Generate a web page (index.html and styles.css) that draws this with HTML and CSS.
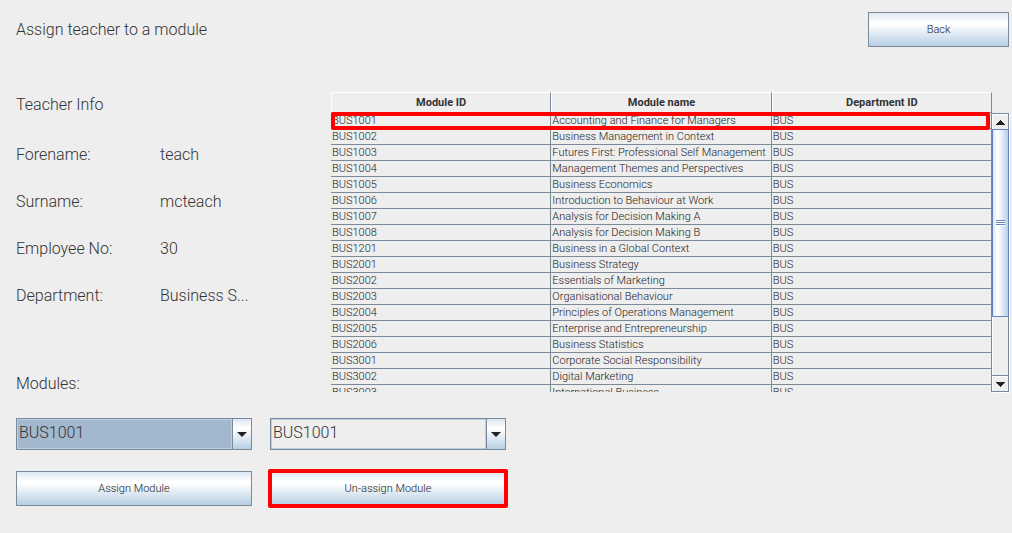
FILE: index.html
```html
<!DOCTYPE html>
<html lang="en">
<head>
<meta charset="utf-8">
<title>Assign teacher to a module</title>
<link rel="stylesheet" href="styles.css">
</head>
<body>
<header class="top">
  <h1 class="title">Assign teacher to a module</h1>
  <button class="btn back" type="button">Back</button>
</header>
<main class="main">
  <section class="info">
    <h2 class="heading">Teacher Info</h2>
    <dl class="details">
      <dt>Forename:</dt><dd>teach</dd>
      <dt>Surname:</dt><dd>mcteach</dd>
      <dt>Employee No:</dt><dd>30</dd>
      <dt>Department:</dt><dd>Business S...</dd>
    </dl>
    <h2 class="heading modules">Modules:</h2>
  </section>
  <section class="pane">
    <div class="viewport">
      <table class="table">
        <thead><tr><th>Module ID</th><th>Module name</th><th>Department ID</th></tr></thead>
        <tbody>
          <tr><td>BUS1001</td><td>Accounting and Finance for Managers</td><td>BUS</td></tr>
          <tr><td>BUS1002</td><td>Business Management in Context</td><td>BUS</td></tr>
          <tr><td>BUS1003</td><td>Futures First: Professional Self Management</td><td>BUS</td></tr>
          <tr><td>BUS1004</td><td>Management Themes and Perspectives</td><td>BUS</td></tr>
          <tr><td>BUS1005</td><td>Business Economics</td><td>BUS</td></tr>
          <tr><td>BUS1006</td><td>Introduction to Behaviour at Work</td><td>BUS</td></tr>
          <tr><td>BUS1007</td><td>Analysis for Decision Making A</td><td>BUS</td></tr>
          <tr><td>BUS1008</td><td>Analysis for Decision Making B</td><td>BUS</td></tr>
          <tr><td>BUS1201</td><td>Business in a Global Context</td><td>BUS</td></tr>
          <tr><td>BUS2001</td><td>Business Strategy</td><td>BUS</td></tr>
          <tr><td>BUS2002</td><td>Essentials of Marketing</td><td>BUS</td></tr>
          <tr><td>BUS2003</td><td>Organisational Behaviour</td><td>BUS</td></tr>
          <tr><td>BUS2004</td><td>Principles of Operations Management</td><td>BUS</td></tr>
          <tr><td>BUS2005</td><td>Enterprise and Entrepreneurship</td><td>BUS</td></tr>
          <tr><td>BUS2006</td><td>Business Statistics</td><td>BUS</td></tr>
          <tr><td>BUS3001</td><td>Corporate Social Responsibility</td><td>BUS</td></tr>
          <tr><td>BUS3002</td><td>Digital Marketing</td><td>BUS</td></tr>
          <tr><td>BUS3003</td><td>International Business</td><td>BUS</td></tr>
        </tbody>
      </table>
    </div>
    <div class="scrollbar">
      <button class="step" type="button" aria-label="Scroll up"><svg width="9" height="5" viewBox="0 0 9 5" shape-rendering="crispEdges"><path d="M4 0h1v1h1v1h1v1h1v1h1v1H0V4h1V3h1V2h1V1h1z"/></svg></button>
      <div class="track"><div class="thumb"><span class="grip"></span></div></div>
      <button class="step down" type="button" aria-label="Scroll down"><svg width="9" height="5" viewBox="0 0 9 5" shape-rendering="crispEdges"><path d="M0 0h9v1H8v1H7v1H6v1H5v1H4V4H3V3H2V2H1V1H0z"/></svg></button>
    </div>
    <div class="mark row-mark"></div>
  </section>
</main>
<form class="actions">
  <div class="combo active">
    <select aria-label="Module to assign"><option>BUS1001</option></select>
    <span class="arrow"><svg width="10" height="5" viewBox="0 0 10 5"><path d="M0 0h10L5 5z"/></svg></span>
  </div>
  <div class="combo">
    <select aria-label="Module to un-assign"><option>BUS1001</option></select>
    <span class="arrow"><svg width="10" height="5" viewBox="0 0 10 5"><path d="M0 0h10L5 5z"/></svg></span>
  </div>
  <button class="btn" type="button">Assign Module</button>
  <div class="marked">
    <button class="btn" type="button">Un-assign Module</button>
    <div class="mark button-mark"></div>
  </div>
</form>
</body>
</html>
```
FILE: styles.css
```css
* { box-sizing: border-box; }
body {
  margin: 0;
  padding: 12px 3px 24px 16px;
  background: #eee;
  color: #333;
  font: 300 16px/24px Roboto, "Liberation Sans", sans-serif;
}
.top {
  display: flex;
  justify-content: space-between;
  align-items: center;
}
.title, .heading { margin: 0; font-size: 16px; font-weight: 300; }
.btn {
  display: block;
  width: 100%;
  height: 35px;
  padding: 0;
  border: 1px solid #7a8a99;
  border-radius: 0;
  background: linear-gradient(#dde8f3, #fff 30%, #fff 34%, #b8cfe5);
  color: #222;
  font: 300 11px/16px Roboto, "Liberation Sans", sans-serif;
}
.back { width: 141px; }
.main {
  display: grid;
  grid-template-columns: 315px minmax(0, 1fr);
  align-items: start;
  margin-top: 45px;
}
.info { padding-top: 1px; }
.details {
  display: grid;
  grid-template-columns: 144px 1fr;
  row-gap: 23px;
  margin: 26px 0 0;
}
.details dd { margin: 0; }
.modules { margin-top: 64px; }
.pane {
  position: relative;
  display: grid;
  grid-template-columns: minmax(0, 1fr) 17px;
}
.viewport { height: 300px; overflow: hidden; }
.table {
  width: 100%;
  table-layout: fixed;
  border-spacing: 0;
  color: #222;
  font-size: 11px;
  font-weight: 300;
  line-height: 15px;
}
.table th {
  height: 21px;
  padding: 0;
  border: 1px solid #7a8a99;
  border-top-color: #fff;
  border-left-color: #fff;
  color: #333;
  line-height: 18px;
  font-weight: 700;
}
.table td {
  height: 16px;
  padding: 0 0 0 1px;
  border: solid #7a8a99;
  border-width: 0 1px 1px 0;
  white-space: nowrap;
}
.scrollbar {
  display: flex;
  flex-direction: column;
  margin-top: 21px;
  border: 1px solid #7a8a99;
  border-width: 1px 1px 1px 0;
  box-shadow: 1px 1px #fff;
}
.step {
  display: flex;
  align-items: center;
  justify-content: center;
  height: 15px;
  padding: 0;
  border: solid #fff;
  border-width: 1px 0 0 1px;
  background: #eee;
  fill: #222;
}
.down { box-shadow: 0 -1px #7a8a99; }
.track { flex: 1; border-left: 1px solid #fff; }
.thumb {
  display: flex;
  align-items: center;
  justify-content: center;
  height: 76%;
  margin: 0 -1px;
  border: 1px solid #6382bf;
  background: linear-gradient(90deg, #dde8f3, #fff 30%, #fff 34%, #b8cfe5);
}
.grip {
  width: 9px;
  height: 6px;
  background: repeating-linear-gradient(#6382bf 0 1px, #fff 1px 2px);
}
.actions {
  display: grid;
  grid-template-columns: 236px 236px;
  gap: 21px 18px;
  margin-top: 22px;
}
.combo {
  display: flex;
  height: 32px;
  border: 1px solid #7a8a99;
}
.combo select {
  flex: 1;
  min-width: 0;
  padding: 0 0 3px 1px;
  border: 1px solid #b8cfe5;
  border-radius: 0;
  appearance: none;
  background: #eee;
  color: #333;
  font: inherit;
}
.active select { background: #a3b8cc; }
.arrow {
  display: flex;
  align-items: center;
  justify-content: center;
  width: 19px;
  border-left: 1px solid #7a8a99;
  background: linear-gradient(#dde8f3, #fff 30%, #fff 34%, #b8cfe5);
  fill: #222;
}
.marked { position: relative; }
.mark {
  position: absolute;
  border: 4px solid #f00;
  border-radius: 2px;
  pointer-events: none;
}
.row-mark { top: 20px; left: 0; right: 19px; height: 18px; }
.button-mark { inset: -2px; }
```
